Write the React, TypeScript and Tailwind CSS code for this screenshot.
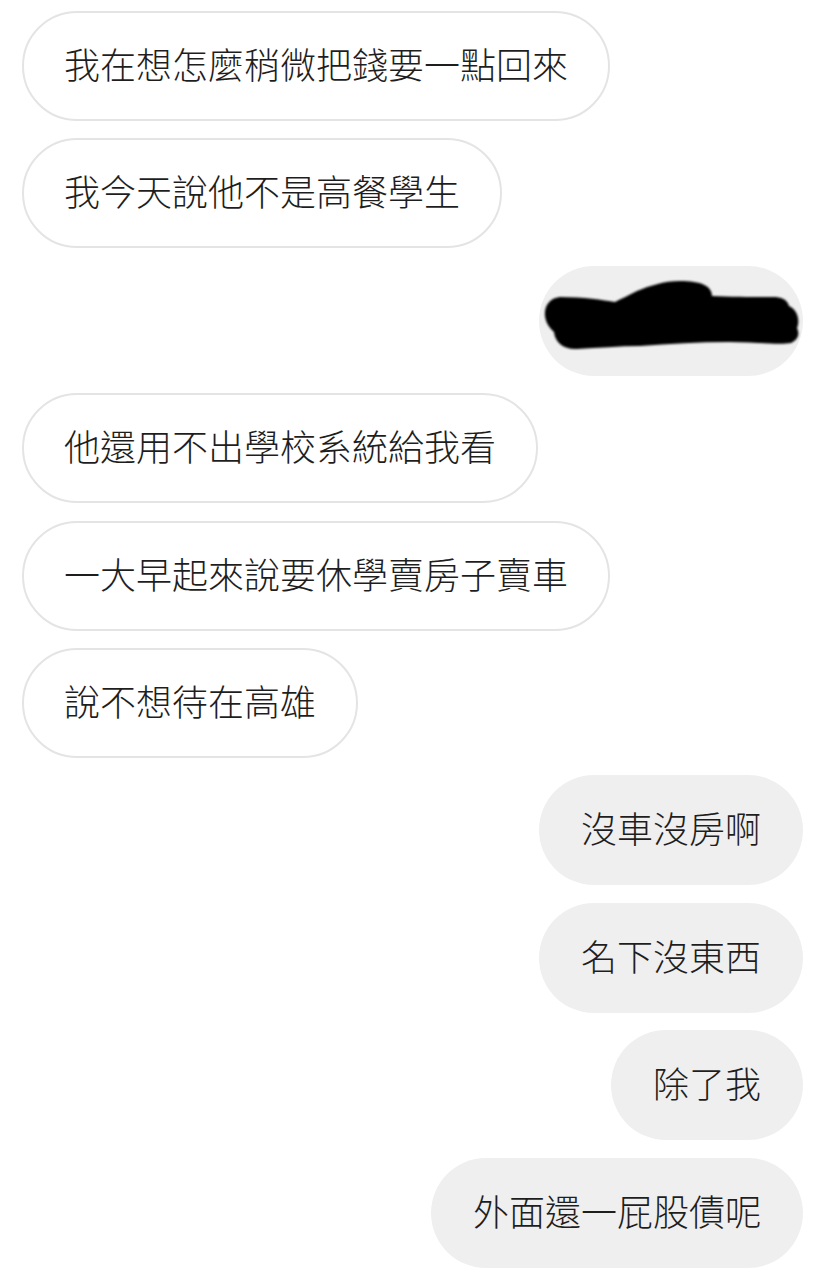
type Msg = { text: string; mine: boolean; redacted?: boolean };

const messages: Msg[] = [
  { text: '我在想怎麼稍微把錢要一點回來', mine: false },
  { text: '我今天說他不是高餐學生', mine: false },
  { text: '', mine: true, redacted: true },
  { text: '他還用不出學校系統給我看', mine: false },
  { text: '一大早起來說要休學賣房子賣車', mine: false },
  { text: '說不想待在高雄', mine: false },
  { text: '沒車沒房啊', mine: true },
  { text: '名下沒東西', mine: true },
  { text: '除了我', mine: true },
  { text: '外面還一屁股債呢', mine: true },
];

function Scribble() {
  return (
    <svg width="264" height="110" viewBox="0 0 264 110" className="block">
      <defs>
        <filter id="soft" x="-5%" y="-20%" width="110%" height="140%">
          <feGaussianBlur stdDeviation="0.9" />
        </filter>
      </defs>
      <path
        filter="url(#soft)"
        fill="#000"
        d="M21 31 C10 32 5 41 6 50 C7 58 11 62 15 66 C16 77 26 84 38 83 C60 82 80 80 101 80 C130 78 160 76 190 76 C215 76 240 79 252 77 C259 74 261 68 258 62 C261 55 259 44 250 40 C248 33 242 31 234 31 C215 31 192 31 173 30 C173 20 162 15 141 15 C125 15 110 20 98 25 C90 29 82 33 76 36 C64 34 45 31 21 31 Z"
      />
    </svg>
  );
}

export default function App() {
  return (
    <div
      className="w-[835px] h-[1280px] bg-white flex flex-col gap-[17.4px] pt-[11px] overflow-hidden"
      style={{ fontFamily: '"Noto Sans CJK TC", "Noto Sans", sans-serif' }}
    >
      {messages.map((m, i) =>
        m.redacted ? (
          <div
            key={i}
            className="self-end mr-[32px] w-[264px] h-[110px] rounded-full bg-[#efefef] overflow-hidden shrink-0"
          >
            <Scribble />
          </div>
        ) : (
          <div
            key={i}
            className={
              m.mine
                ? 'self-end mr-[32px] h-[110px] shrink-0 rounded-full bg-[#efefef] px-[42px] pb-[6px] flex items-center'
                : 'self-start ml-[22px] h-[110px] shrink-0 rounded-full bg-white border-2 border-[#e4e4e4] px-[40px] pb-[6px] flex items-center'
            }
          >
            <span className="text-[36px] leading-none font-light text-[#1e1e1e] whitespace-nowrap">{m.text}</span>
          </div>
        )
      )}
    </div>
  );
}
